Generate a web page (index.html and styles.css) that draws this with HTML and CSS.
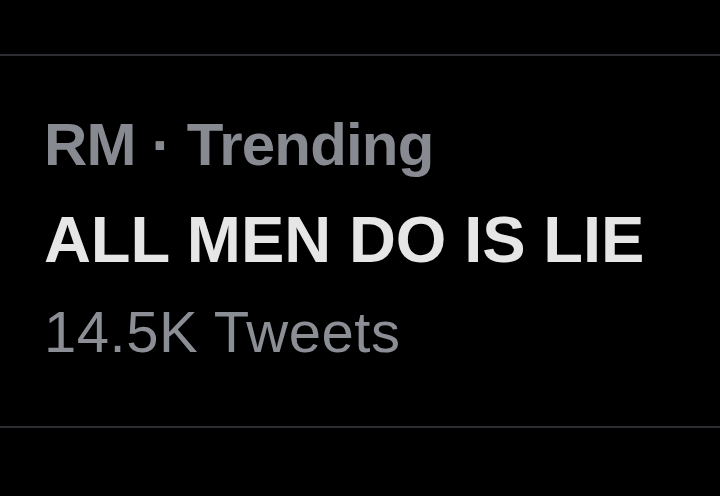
FILE: index.html
```html
<html>
<head>
  <meta charset="utf-8">
  <link rel="stylesheet" href="styles.css">
</head>
<body>
  <div class="trend-list">
    <div class="trend trend-prev"></div>

    <div class="trend">
      <div class="trend-meta">RM · Trending</div>
      <div class="trend-title">ALL MEN DO IS LIE</div>
      <div class="trend-count">14.5K Tweets</div>
    </div>

    <div class="trend trend-next">
      <div class="trend-meta">lifestyle · Trending</div>
    </div>
  </div>
</body>
</html>
```

FILE: styles.css
```css
body {
  margin: 0;
  background-color: #000;
  font-family: 'Liberation Sans', Arial, sans-serif;
  overflow: hidden;
}

.trend-list {
  width: 720px;
}

.trend {
  border-bottom: 2px solid #2c2d30;
  padding: 53px 44px 60px 44px;
}

.trend-prev {
  height: 54px;
  padding: 0;
}

.trend-meta {
  font-size: 60px;
  line-height: 72px;
  font-weight: 700;
  color: #878a91;
  letter-spacing: -0.8px;
}

.trend-title {
  margin-top: 20px;
  font-size: 65px;
  line-height: 78px;
  font-weight: 700;
  color: #e6e6e6;
  letter-spacing: -0.1px;
}

.trend-count {
  margin-top: 19px;
  font-size: 58px;
  line-height: 68px;
  color: #8b8e95;
  letter-spacing: 0.5px;
}

.trend-next {
  border-bottom: none;
  padding-top: 56px;
}
```
